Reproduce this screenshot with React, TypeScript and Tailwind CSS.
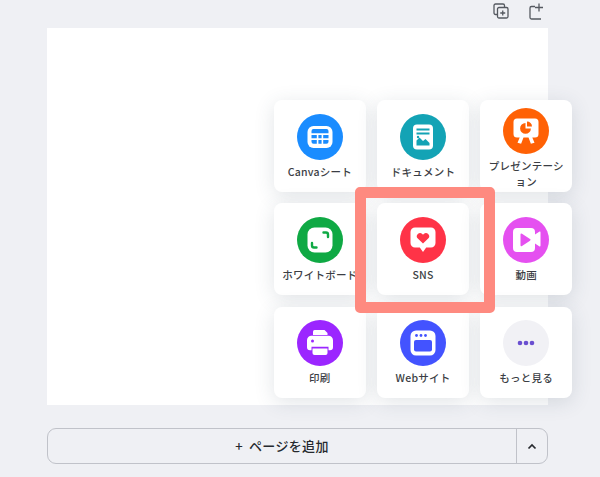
const font = '"Noto Sans CJK JP", Inter, sans-serif';

function Disc({ color, children }: { color: string; children: React.ReactNode }) {
  return (
    <svg width="46" height="46" viewBox="0 0 46 46" aria-hidden="true">
      <circle cx="23" cy="23" r="23" fill={color} />
      {children}
    </svg>
  );
}

const icons: Record<string, React.ReactNode> = {
  sheet: (
    <Disc color="#1a8cff">
      <rect x="10.500" y="12" width="25" height="22" rx="6" fill="#fff" />
      <path d="M14.500 17a2 2 0 0 1 2-2h13a2 2 0 0 1 2 2v2.200h-17zM14.500 21h5.300v3.200h-5.300zM21.400 21h3.200v3.200h-3.200zM26.200 21h5.300v3.200h-5.300zM14.500 26h5.300v3.800h-3.300a2 2 0 0 1-2-2zM21.400 26h3.200v3.800h-3.200zM26.200 26h5.300v1.800a2 2 0 0 1-2 2h-3.300z" fill="#1a8cff" />
    </Disc>
  ),
  doc: (
    <Disc color="#13a3b5">
      <rect x="13" y="10.500" width="20" height="25" rx="4" fill="#fff" />
      <path d="M16.500 14.500h13v2h-13zM16.500 18.500h13v2h-13z" fill="#13a3b5" />
      <path d="M16.500 31.500v-5l3-3 3.500 3.500 2.500-2 4 4v2.500z" fill="#13a3b5" />
      <circle cx="18" cy="23" r="1.200" fill="#13a3b5" />
    </Disc>
  ),
  slides: (
    <Disc color="#ff6105">
      <path d="M14 10.500h18a3.500 3.500 0 0 1 3.500 3.500v12a3.500 3.500 0 0 1-3.500 3.500h-2.700l2.200 5.200-3.600 1-2.400-6.200h-5l-2.400 6.200-3.600-1 2.200-5.200H14a3.500 3.500 0 0 1-3.500-3.500V14a3.500 3.500 0 0 1 3.500-3.500z" fill="#fff" />
      <path d="M22.500 15a5.400 5.400 0 1 0 5.400 5.400h-5.400z" fill="#ff6105" />
      <path d="M24 13.500a5 5 0 0 1 5 5h-5z" fill="#ff6105" />
    </Disc>
  ),
  board: (
    <Disc color="#0fa944">
      <rect x="10.500" y="10.500" width="25" height="25" rx="7" fill="#fff" />
      <path d="M26.500 15.500h2.500a2 2 0 0 1 2 2V20M19.500 30.500H17a2 2 0 0 1-2-2V26" fill="none" stroke="#0fa944" strokeWidth="2.400" strokeLinecap="round" />
    </Disc>
  ),
  social: (
    <Disc color="#ff3347">
      <path d="M15 10.500h16a4.500 4.500 0 0 1 4.500 4.500v11a4.500 4.500 0 0 1-4.500 4.500h-4.800L23 35l-3.200-4.500H15a4.500 4.500 0 0 1-4.500-4.500V15a4.500 4.500 0 0 1 4.500-4.500z" fill="#fff" />
      <path d="M23 26.500l-5.200-5a3.200 3.200 0 0 1 0-4.500 3.200 3.200 0 0 1 4.500 0l.7.7.7-.7a3.200 3.200 0 0 1 4.500 0 3.200 3.200 0 0 1 0 4.500z" fill="#ff3347" />
    </Disc>
  ),
  video: (
    <Disc color="#e550f0">
      <path d="M14 11h14a4 4 0 0 1 4 4v2.500l4.200-2.800a.8.8 0 0 1 1.300.7v13.200a.8.8 0 0 1-1.300.7L32 26.500V31a4 4 0 0 1-4 4H14a4 4 0 0 1-4-4V15a4 4 0 0 1 4-4z" fill="#fff" />
      <path d="M17.500 17.500a1 1 0 0 1 1.500-.8l8 5.300a1 1 0 0 1 0 1.700l-8 5.300a1 1 0 0 1-1.500-.8z" fill="#e550f0" />
    </Disc>
  ),
  print: (
    <Disc color="#9b26ff">
      <path d="M16 15v-3.500a1.500 1.500 0 0 1 1.500-1.500h10l3 3v2z" fill="#fff" />
      <path d="M14.500 15.800h17a4.500 4.500 0 0 1 4.500 4.500v7a3 3 0 0 1-3 3h-1.500v-3.500h-17v3.500H13a3 3 0 0 1-3-3v-7a4.500 4.500 0 0 1 4.500-4.500z" fill="#fff" />
      <path d="M15.500 28.500h15V33a2 2 0 0 1-2 2h-11a2 2 0 0 1-2-2z" fill="#fff" />
      <circle cx="15.500" cy="21" r="1.500" fill="#9b26ff" />
    </Disc>
  ),
  web: (
    <Disc color="#4353ff">
      <rect x="10.500" y="10.500" width="25" height="25" rx="5.500" fill="#fff" />
      <circle cx="16.500" cy="15.500" r="1.400" fill="#4353ff" />
      <circle cx="21" cy="15.500" r="1.400" fill="#4353ff" />
      <circle cx="25.500" cy="15.500" r="1.400" fill="#4353ff" />
      <rect x="14" y="20" width="18" height="11.500" rx="2" fill="#4353ff" />
    </Disc>
  ),
  more: (
    <Disc color="#f1f1f5">
      <circle cx="17" cy="23" r="2.300" fill="#6a4fd0" />
      <circle cx="23" cy="23" r="2.300" fill="#6a4fd0" />
      <circle cx="29" cy="23" r="2.300" fill="#6a4fd0" />
    </Disc>
  ),
};

const items = [
  { icon: 'sheet', label: 'Canvaシート', pad: 'pt-[13.500px]' },
  { icon: 'doc', label: 'ドキュメント', pad: 'pt-[13.500px]' },
  { icon: 'slides', label: 'プレゼンテーション', pad: 'pt-[8px]' },
  { icon: 'board', label: 'ホワイトボード', pad: 'pt-[13.500px]' },
  { icon: 'social', label: 'SNS', pad: 'pt-[13.500px]' },
  { icon: 'video', label: '動画', pad: 'pt-[13.500px]' },
  { icon: 'print', label: '印刷', pad: 'pt-[13.500px]' },
  { icon: 'web', label: 'Webサイト', pad: 'pt-[13.500px]' },
  { icon: 'more', label: 'もっと見る', pad: 'pt-[13.500px]' },
];

export default function App() {
  return (
    <div className="w-[600px] h-[477px] bg-[#eff0f4] flex flex-col relative overflow-hidden" style={{ fontFamily: font }}>
      <div className="h-[28px] pl-[493px] flex items-start pt-[3px] gap-[19px] text-[#555960]">
        <svg width="16" height="16" viewBox="0 0 16 16" fill="none" stroke="currentColor" strokeWidth="1.300" aria-hidden="true">
          <path d="M4 11.500H2.500A1.500 1.500 0 0 1 1 10V2.500A1.500 1.500 0 0 1 2.500 1H10a1.500 1.500 0 0 1 1.500 1.500V4" />
          <rect x="4.500" y="4.500" width="10.500" height="10.500" rx="1.500" />
          <path d="M9.750 7.500v5M7.250 10h5" />
        </svg>
        <svg width="16" height="17" viewBox="0 0 16 17" fill="none" stroke="currentColor" strokeWidth="1.300" aria-hidden="true">
          <path d="M7 3.500H3.500A1.500 1.500 0 0 0 2 5v9.500A1.500 1.500 0 0 0 3.500 16H13M11 .5v8M7 4.500h8" />
        </svg>
      </div>

      <div className="ml-[47px] w-[501px] h-[377px] bg-white shrink-0" />

      <div className="ml-[47px] mt-[23px] w-[501px] h-[36px] flex border border-[#c0c2c9] rounded-[9px] text-[#26292e]">
        <div className="flex-1 flex items-center justify-center text-[13px] font-medium tracking-[0.35px]">
          <span className="mr-[6px]">+</span>ページを追加
        </div>
        <div className="w-[31px] border-l border-[#c0c2c9] flex items-center justify-center">
          <svg width="10" height="7" viewBox="0 0 10 7" fill="none" stroke="currentColor" strokeWidth="1.700" aria-hidden="true">
            <path d="M1.500 5.500L5 2l3.500 3.500" />
          </svg>
        </div>
      </div>

      <div className="absolute left-[274px] top-[100px] grid grid-cols-[91.700px_91.700px_91.700px] auto-rows-[91.700px] gap-x-[11.500px] gap-y-[11.600px]">
        {items.map((it) => (
          <div key={it.label} className={`bg-white rounded-[8px] shadow-[0_4px_20px_rgba(57,76,96,0.15)] flex flex-col items-center ${it.pad}`}>
            {icons[it.icon]}
            <div className="mt-[4px] px-[6px] w-full text-center text-[10.500px] leading-[15.500px] font-medium text-[#3b3e44] tracking-[0.25px] [overflow-wrap:anywhere]">
              {it.label}
            </div>
          </div>
        ))}
      </div>

      <div className="absolute left-[354.700px] top-[186.700px] w-[140.600px] h-[126.600px] border-[11.500px] border-[#fe8a80] rounded-[5px]" />
    </div>
  );
}
